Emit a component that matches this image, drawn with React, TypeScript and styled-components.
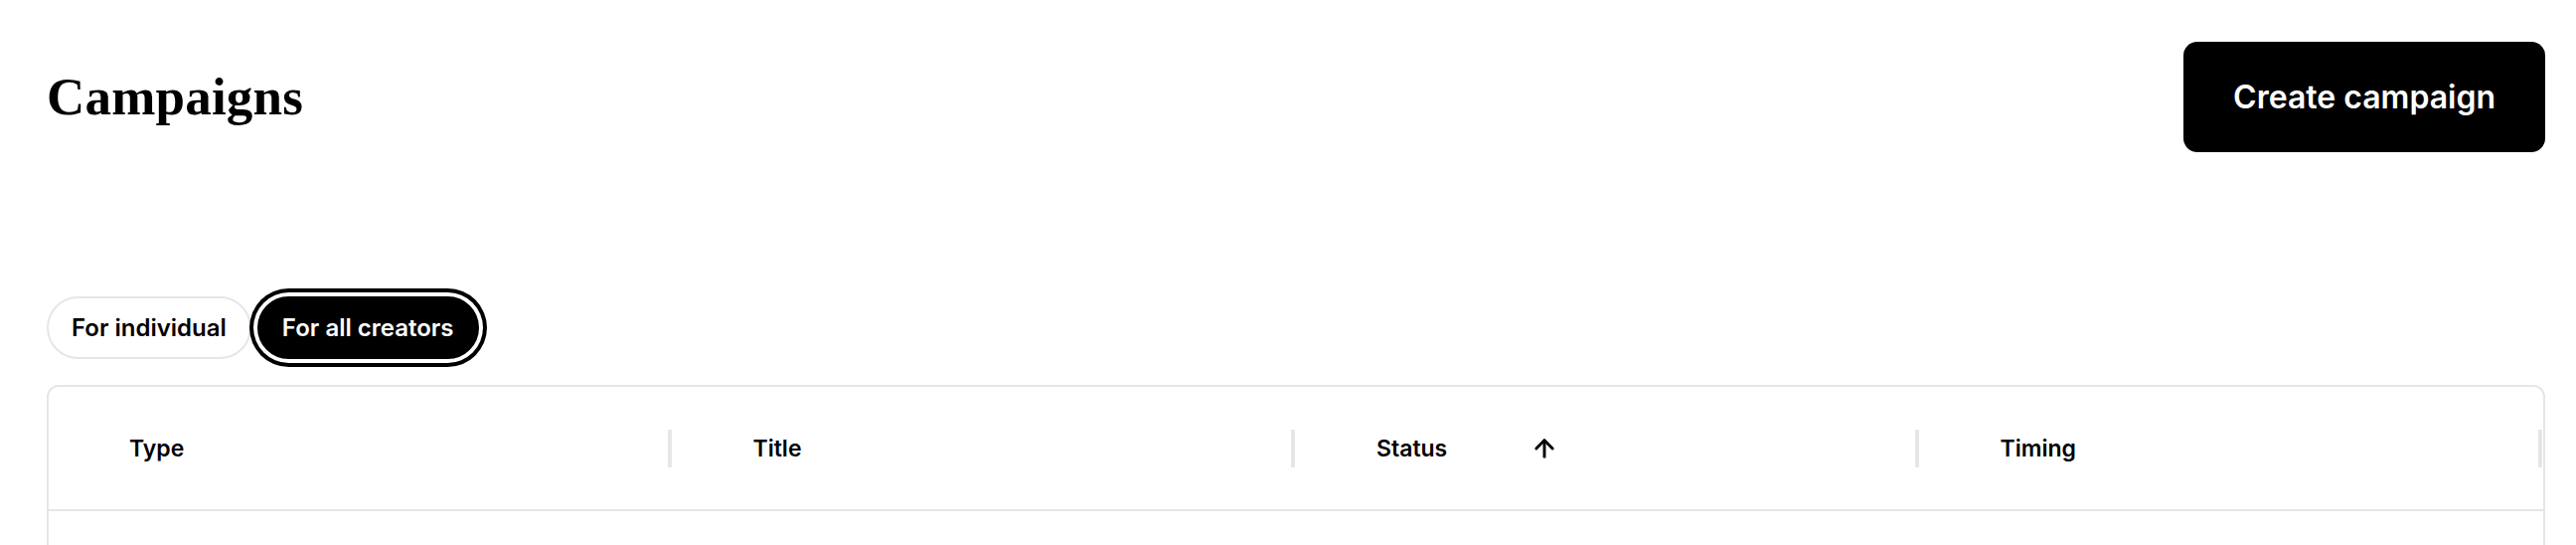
import { useState } from "react";
import styled, { createGlobalStyle } from "styled-components";
import { ArrowUp } from "lucide-react";

const GlobalStyle = createGlobalStyle`
  * {
    box-sizing: border-box;
  }
  body {
    margin: 0;
    background: #ffffff;
    font-family: Inter, "Noto Sans", sans-serif;
    color: #000000;
  }
`;

type Audience = "individual" | "all";

const columns = [
    { key: "type", label: "Type" },
    { key: "title", label: "Title" },
    { key: "status", label: "Status", sorted: true },
    { key: "timing", label: "Timing" },
];

const App = () => {
    const [audience, setAudience] = useState<Audience>("all");

    return (
        <>
            <GlobalStyle />
            <Page>
                <Header>
                    <Heading>Campaigns</Heading>
                    <PrimaryButton type="button">Create campaign</PrimaryButton>
                </Header>

                <Tabs>
                    <Tab
                        type="button"
                        $active={audience === "individual"}
                        onClick={() => setAudience("individual")}
                    >
                        For individual
                    </Tab>
                    <Tab
                        type="button"
                        $active={audience === "all"}
                        onClick={() => setAudience("all")}
                    >
                        For all creators
                    </Tab>
                </Tabs>

                <Table>
                    <HeadRow>
                        {columns.map(col => (
                            <HeadCell key={col.key}>
                                <HeadLabel>{col.label}</HeadLabel>
                                {col.sorted && (
                                    <SortIcon>
                                        <ArrowUp size={28} strokeWidth={2.5} />
                                    </SortIcon>
                                )}
                                <Divider />
                            </HeadCell>
                        ))}
                    </HeadRow>
                    <BodyRow />
                </Table>
            </Page>
        </>
    );
};

const Page = styled.div`
  display: flex;
  flex-direction: column;
  padding: 42px 31px 0 47px;
`;

const Header = styled.div`
  display: flex;
  align-items: center;
  justify-content: space-between;
`;

const Heading = styled.h1`
  margin: 0;
  font-family: "Liberation Serif", "DejaVu Serif", serif;
  font-weight: 700;
  font-size: 53px;
  letter-spacing: 0.2px;
  line-height: 1;
`;

const PrimaryButton = styled.button`
  height: 111px;
  padding: 0 50px;
  border: none;
  border-radius: 14px;
  background: #000000;
  color: #ffffff;
  font-family: Inter, sans-serif;
  font-weight: 600;
  font-size: 32px;
  cursor: pointer;
`;

const Tabs = styled.div`
  display: flex;
  gap: 6px;
  margin-top: 145px;
`;

const Tab = styled.button<{ $active: boolean }>`
  height: 63px;
  padding: 0 23px;
  border-radius: 999px;
  border: 2px solid ${p => (p.$active ? "#000000" : "#e6e6e6")};
  background: ${p => (p.$active ? "#000000" : "#ffffff")};
  color: ${p => (p.$active ? "#ffffff" : "#000000")};
  box-shadow: ${p => (p.$active ? "0 0 0 4px #ffffff, 0 0 0 8px #000000" : "none")};
  font-family: Inter, sans-serif;
  font-weight: 600;
  font-size: 24px;
  cursor: pointer;
`;

const Table = styled.div`
  margin-top: 26px;
  border: 2px solid #e6e6e6;
  border-radius: 12px;
`;

const HeadRow = styled.div`
  display: grid;
  grid-template-columns: repeat(4, 1fr);
  height: 125px;
  border-bottom: 2px solid #e6e6e6;
`;

const HeadCell = styled.div`
  display: flex;
  align-items: center;
  padding-left: 81px;
  padding-right: 1px;
`;

const HeadLabel = styled.span`
  font-weight: 600;
  font-size: 23px;
`;

const SortIcon = styled.span`
  display: flex;
  margin-left: 84px;
`;

const Divider = styled.span`
  margin-left: auto;
  width: 4px;
  height: 38px;
  background: #e6e6e6;
`;

const BodyRow = styled.div`
  height: 120px;
`;

export default App;
